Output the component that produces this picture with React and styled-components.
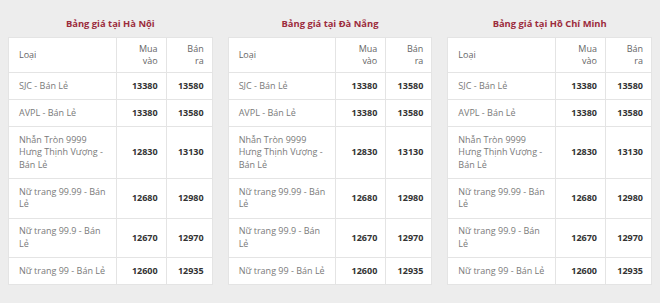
import styled, { createGlobalStyle } from 'styled-components';

const GlobalStyle = createGlobalStyle`
  html, body {
    margin: 0;
    padding: 0;
    background: #ededed;
  }
  body {
    font-family: "Open Sans", "Liberation Sans", sans-serif;
  }
`;

const rows = [
  { name: 'SJC - Bán Lẻ', buy: 13380, sell: 13580 },
  { name: 'AVPL - Bán Lẻ', buy: 13380, sell: 13580 },
  { name: 'Nhẫn Tròn 9999 Hưng Thịnh Vượng - Bán Lẻ', buy: 12830, sell: 13130 },
  { name: 'Nữ trang 99.99 - Bán Lẻ', buy: 12680, sell: 12980 },
  { name: 'Nữ trang 99.9 - Bán Lẻ', buy: 12670, sell: 12970 },
  { name: 'Nữ trang 99 - Bán Lẻ', buy: 12600, sell: 12935 },
];

const cities = ['Hà Nội', 'Đà Nẵng', 'Hồ Chí Minh'];

export default function App() {
  return (
    <>
      <GlobalStyle />
      <Page>
        {cities.map((city) => {
          return (
            <Column key={city}>
              <Title>Bảng giá tại {city}</Title>
              <PriceTable>
                <colgroup>
                  <col style={{ width: '52.8%' }} />
                  <col style={{ width: '24.6%' }} />
                  <col style={{ width: '22.6%' }} />
                </colgroup>
                <thead>
                  <tr>
                    <HeadCell>Loại</HeadCell>
                    <HeadCell $right>
                      Mua
                      <br />
                      vào
                    </HeadCell>
                    <HeadCell $right>
                      Bán
                      <br />
                      ra
                    </HeadCell>
                  </tr>
                </thead>
                <tbody>
                  {rows.map((item) => {
                    return (
                      <tr key={item.name}>
                        <NameCell>{item.name}</NameCell>
                        <PriceCell>{item.buy}</PriceCell>
                        <PriceCell>{item.sell}</PriceCell>
                      </tr>
                    );
                  })}
                </tbody>
              </PriceTable>
            </Column>
          );
        })}
      </Page>
    </>
  );
}

const Page = styled.main`
  display: grid;
  grid-template-columns: repeat(3, 1fr);
  gap: 15px;
  padding: 0 8px;
`;

const Column = styled.section`
  display: flex;
  flex-direction: column;
`;

const Title = styled.h3`
  margin: 0;
  padding: 17px 0 7px;
  line-height: 13px;
  font-size: 9.4px;
  font-weight: 700;
  text-align: center;
  color: #9c2b3c;
`;

const PriceTable = styled.table`
  width: 100%;
  table-layout: fixed;
  border-collapse: collapse;
  background: #ffffff;
  border: 1px solid #e4e4e4;
  font-size: 9px;
  line-height: 12.5px;
`;

const HeadCell = styled.th`
  padding: 4.5px 8px 4.5px 10px;
  border: 1px solid #e4e4e4;
  font-weight: 400;
  color: #666666;
  text-align: ${(props) => (props.$right ? 'right' : 'left')};
  vertical-align: middle;
`;

const NameCell = styled.td`
  padding: 6.75px 8px 6.75px 10px;
  border: 1px solid #e4e4e4;
  color: #7a7a7a;
  vertical-align: middle;
`;

const PriceCell = styled.td`
  padding: 6.75px 8px;
  border: 1px solid #e4e4e4;
  color: #333333;
  font-weight: 700;
  text-align: right;
  vertical-align: middle;
`;
